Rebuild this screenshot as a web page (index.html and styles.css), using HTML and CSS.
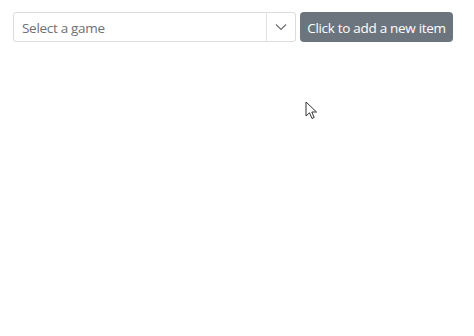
FILE: index.html
```html
<!DOCTYPE html>
<html>
<head>
<meta charset="utf-8">
<link rel="stylesheet" href="styles.css">
</head>
<body>
<div class="toolbar">
  <div class="combo">
    <span class="combo-text">Select a game</span>
    <span class="combo-btn">
      <svg width="12" height="8" viewBox="0 0 12 8"><path d="M1 1.5 L6 6.5 L11 1.5" fill="none" stroke="#6b6b6b" stroke-width="1.1"/></svg>
    </span>
  </div>
  <button class="add-btn">Click to add a new item</button>
</div>
<svg class="cursor" width="14" height="20" viewBox="0 0 14 20"><path d="M1 1 L1 15 L4.5 11.8 L7 17.5 L9.2 16.5 L6.8 11 L11.5 11 Z" fill="#fff" stroke="#333" stroke-width="1" stroke-linejoin="round"/></svg>
</body>
</html>
```
FILE: styles.css
```css
html, body { margin: 0; padding: 0; background: #fff; }
body {
  font-family: "Open Sans", "Noto Sans", sans-serif;
  width: 474px; height: 336px; overflow: hidden; position: relative;
}
.toolbar {
  display: flex;
  align-items: center;
  gap: 4px;
  padding: 12px 0 0 13px;
}
.combo {
  display: flex;
  align-items: stretch;
  width: 281px;
  height: 28px;
  border: 1px solid #dcdcdc;
  border-radius: 3px;
  background: #fff;
}
.combo-text {
  flex: 1;
  display: flex;
  align-items: center;
  padding-left: 8px;
  padding-top: 1px;
  font-size: 13.5px;
  letter-spacing: -0.3px;
  color: #707070;
}
.combo-btn {
  width: 28px;
  border-left: 1px solid #e2e2e2;
  display: flex;
  align-items: center;
  justify-content: center;
}
.add-btn {
  height: 30px;
  width: 153px;
  padding: 1px 0 0;
  border: none;
  border-radius: 4px;
  background: #6c757d;
  color: #fff;
  white-space: nowrap;
  font-family: "Open Sans", "Noto Sans", sans-serif;
  font-size: 13.5px;
  letter-spacing: -0.3px;
}
.cursor { position: absolute; left: 305px; top: 101px; }
```
